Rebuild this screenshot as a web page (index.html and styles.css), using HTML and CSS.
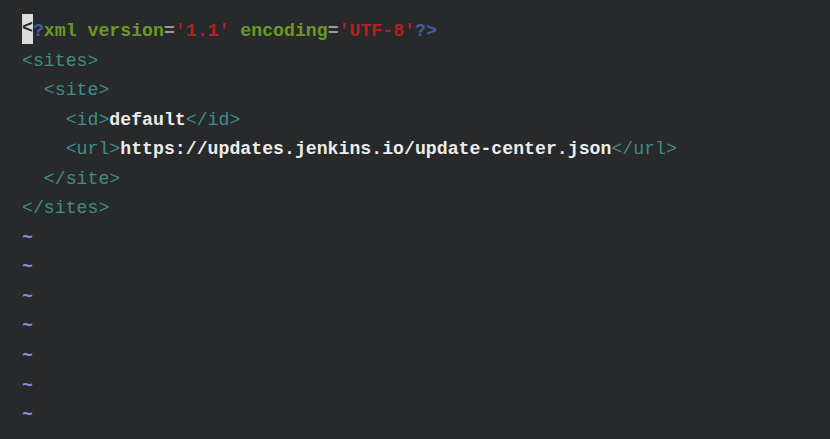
FILE: index.html
```html
<!DOCTYPE html>
<html lang="en">

<head>
  <meta charset="UTF-8">
  <meta name="viewport" content="width=device-width, initial-scale=1.0">
  <title>hudson.model.UpdateCenter.xml</title>
  <link rel="stylesheet" href="styles.css">
</head>

<body>
  <pre class="editor"><span class="cursor">&lt;</span><span class="pi">?</span><span class="kw">xml version</span><span class="eq">=</span><span class="str">'1.1'</span> <span class="kw">encoding</span><span class="eq">=</span><span class="str">'UTF-8'</span><span class="pi">?&gt;</span>
<span class="tag">&lt;sites&gt;</span>
  <span class="tag">&lt;site&gt;</span>
    <span class="tag">&lt;id&gt;</span><span class="txt">default</span><span class="tag">&lt;/id&gt;</span>
    <span class="tag">&lt;url&gt;</span><span class="txt">https://updates.jenkins.io/update-center.json</span><span class="tag">&lt;/url&gt;</span>
  <span class="tag">&lt;/site&gt;</span>
<span class="tag">&lt;/sites&gt;</span>
<span class="tilde">~</span>
<span class="tilde">~</span>
<span class="tilde">~</span>
<span class="tilde">~</span>
<span class="tilde">~</span>
<span class="tilde">~</span>
<span class="tilde">~</span></pre>
</body>

</html>
```

FILE: styles.css
```css
html,
body {
  margin: 0;
  height: 100%;
  overflow: hidden;
  background-color: #28292b;
}

.editor {
  margin: 0;
  padding: 14px 0 0 22px;
  font-family: "Liberation Mono", "DejaVu Sans Mono", monospace;
  font-weight: bold;
  font-size: 18.2px;
  line-height: 29.55px;
  color: #e6e6e6;
}

.cursor {
  display: inline-block;
  background-color: #dcdcdc;
  color: #28292b;
  line-height: 29.55px;
  vertical-align: 3px;
}

.pi {
  color: #3f5f9c;
}

.kw {
  color: #6a9a22;
}

.eq {
  color: #9a9a9a;
}

.str {
  color: #b3211f;
}

.tag {
  color: #3f8d88;
  font-weight: normal;
}

.txt {
  color: #ececec;
}

.tilde {
  color: #8c8cd4;
}
```
